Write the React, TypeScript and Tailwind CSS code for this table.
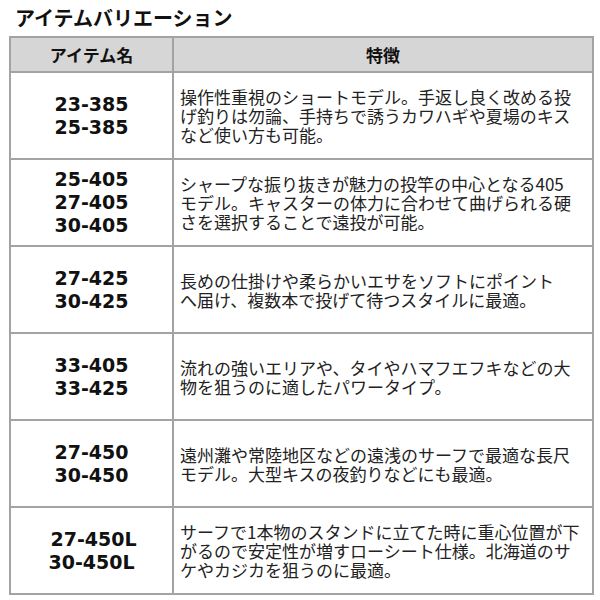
import React from "react";

const rows: { models: string[]; desc: string[]; shift?: boolean }[] = [
  {
    models: ["23-385", "25-385"],
    desc: [
      "操作性重視のショートモデル。手返し良く改める投",
      "げ釣りは勿論、手持ちで誘うカワハギや夏場のキス",
      "など使い方も可能。",
    ],
  },
  {
    models: ["25-405", "27-405", "30-405"],
    desc: [
      "シャープな振り抜きが魅力の投竿の中心となる405",
      "モデル。キャスターの体力に合わせて曲げられる硬",
      "さを選択することで遠投が可能。",
    ],
  },
  {
    models: ["27-425", "30-425"],
    desc: [
      "長めの仕掛けや柔らかいエサをソフトにポイント",
      "へ届け、複数本で投げて待つスタイルに最適。",
    ],
  },
  {
    models: ["33-405", "33-425"],
    desc: [
      "流れの強いエリアや、タイやハマフエフキなどの大",
      "物を狙うのに適したパワータイプ。",
    ],
  },
  {
    models: ["27-450", "30-450"],
    desc: [
      "遠州灘や常陸地区などの遠浅のサーフで最適な長尺",
      "モデル。大型キスの夜釣りなどにも最適。",
    ],
  },
  {
    models: ["27-450L", "30-450L"],
    desc: [
      "サーフで1本物のスタンドに立てた時に重心位置が下",
      "がるので安定性が増すローシート仕様。北海道のサ",
      "ケやカジカを狙うのに最適。",
    ],
    shift: true,
  },
];

const jp = { fontFamily: '"Noto Sans CJK JP", "Noto Sans", sans-serif' };
const num = { fontFamily: '"DejaVu Sans", Verdana, sans-serif' };

export default function App() {
  return (
    <div className="w-[600px] h-[600px] bg-white overflow-hidden">
      <div
        className="h-[36px] flex items-center pl-[15px] text-[20px] font-bold text-[#111] leading-none"
        style={jp}
      >
        アイテムバリエーション
      </div>
      <table className="ml-[9px] w-[583px] border-collapse table-fixed">
        <colgroup>
          <col className="w-[163px]" />
          <col className="w-[420px]" />
        </colgroup>
        <thead>
          <tr className="h-[35px] bg-[#d6d6d6]">
            <th
              className="border-2 border-[#a3a3a3] text-[17px] font-bold text-[#111] text-center leading-none"
              style={jp}
            >
              アイテム名
            </th>
            <th
              className="border-2 border-[#a3a3a3] text-[17px] font-bold text-[#111] text-center leading-none"
              style={jp}
            >
              特徴
            </th>
          </tr>
        </thead>
        <tbody>
          {rows.map((r, i) => (
            <tr key={i} className="h-[87px]">
              <td
                className="border-2 border-[#a3a3a3] text-center align-middle text-[19px] font-bold leading-[23px] text-[#111]"
                style={num}
              >
                {r.models.map((m, j) => (
                  <div key={j} className={r.shift && j === 0 ? "pl-[4px]" : ""}>
                    {m}
                  </div>
                ))}
              </td>
              <td
                className="border-2 border-[#a3a3a3] align-middle pl-[6px] text-[17px] leading-[19px] text-[#222] whitespace-nowrap"
                style={jp}
              >
                <p>
                  {r.desc.map((d, j) => (
                    <React.Fragment key={j}>
                      {j > 0 && <br />}
                      {d}
                    </React.Fragment>
                  ))}
                </p>
              </td>
            </tr>
          ))}
        </tbody>
      </table>
    </div>
  );
}
